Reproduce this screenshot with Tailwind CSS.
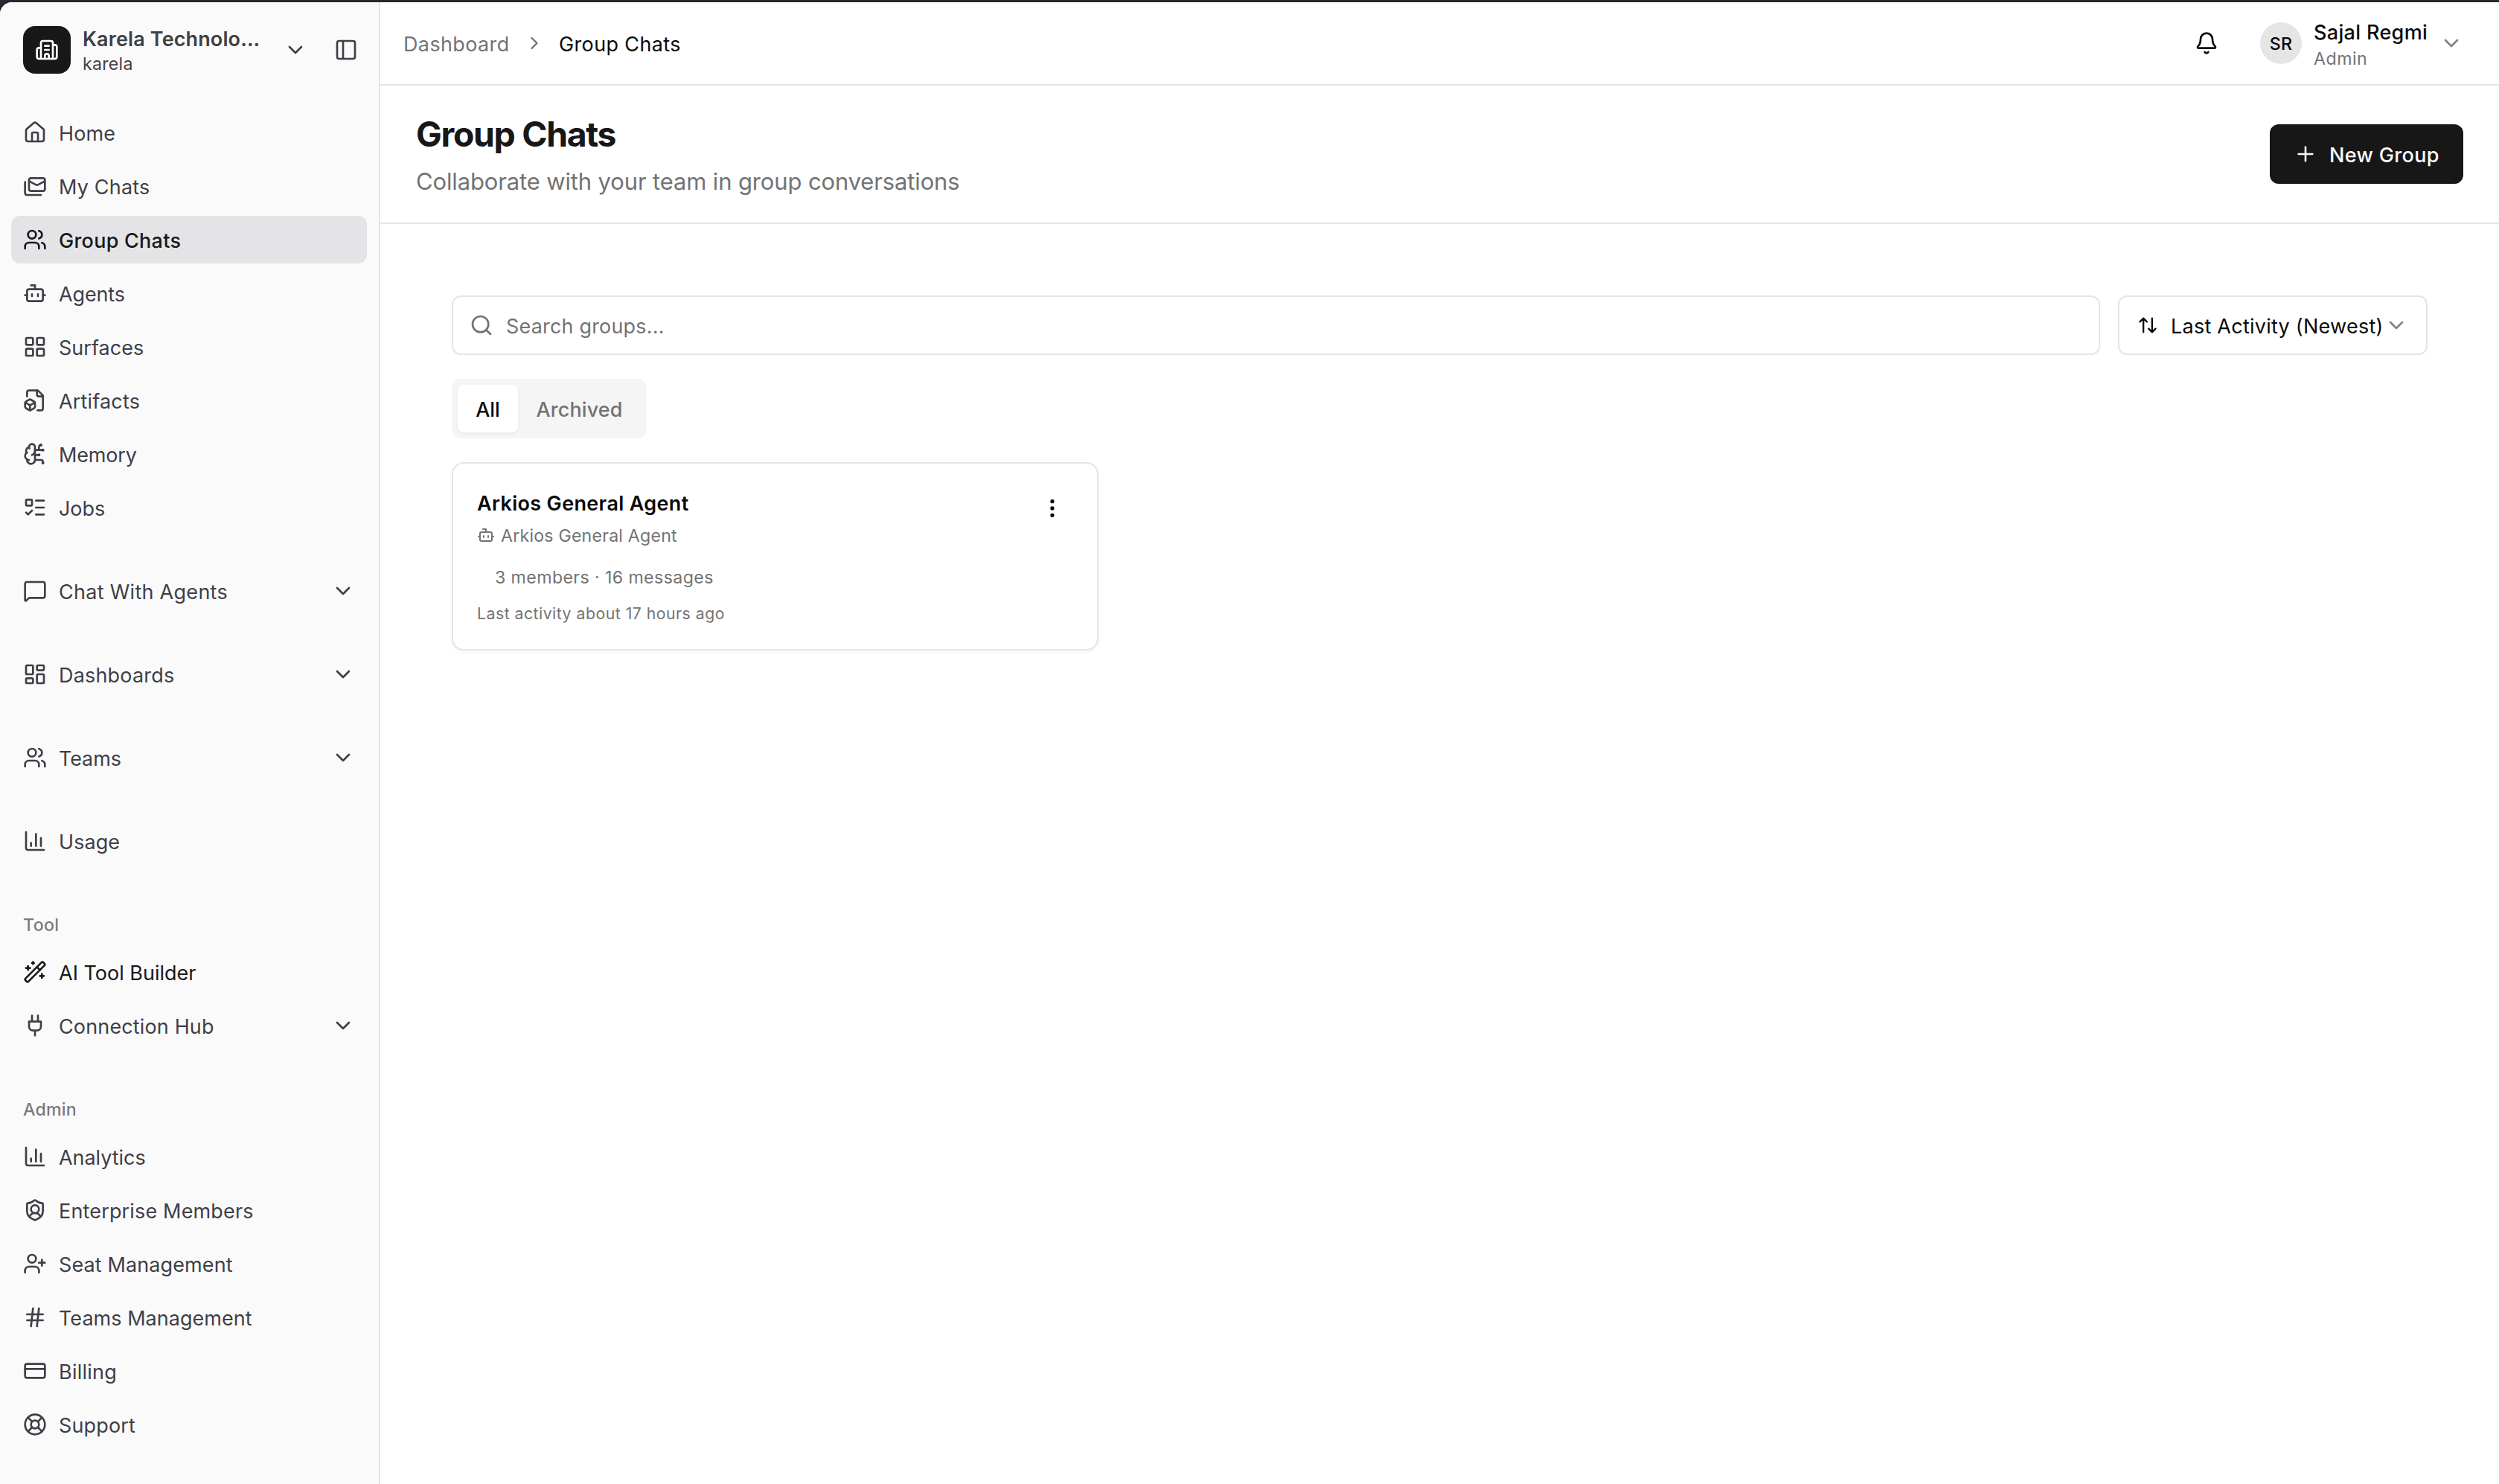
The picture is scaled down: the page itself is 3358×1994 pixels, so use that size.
<!DOCTYPE html>
<html lang="en">
<head>
<meta charset="utf-8">
<title>Group Chats</title>
<script src="https://cdn.jsdelivr.net/npm/@tailwindcss/browser@4"></script>
</head>
<body class="h-[1994px] w-[3358px] overflow-hidden bg-[#28262f] pt-[3px] font-['Inter',sans-serif] text-[27px] leading-[41px] text-neutral-950">

<!-- Icon sprite -->
<svg class="hidden" aria-hidden="true">
  <symbol id="building" viewBox="0 0 24 24"><path d="M10 12h4M10 8h4M14 21v-3a2 2 0 0 0-4 0v3M6 10H4a2 2 0 0 0-2 2v7a2 2 0 0 0 2 2h16a2 2 0 0 0 2-2V9a2 2 0 0 0-2-2h-2M6 21V5a2 2 0 0 1 2-2h8a2 2 0 0 1 2 2v16"/></symbol>
  <symbol id="chevron-down" viewBox="0 0 24 24"><path d="m6 9 6 6 6-6"/></symbol>
  <symbol id="chevron-right" viewBox="0 0 24 24"><path d="m9 18 6-6-6-6"/></symbol>
  <symbol id="panel" viewBox="0 0 24 24"><rect width="18" height="18" x="3" y="3" rx="2"/><path d="M9 3v18"/></symbol>
  <symbol id="house" viewBox="0 0 24 24"><path d="M15 21v-8a1 1 0 0 0-1-1h-4a1 1 0 0 0-1 1v8"/><path d="M3 10a2 2 0 0 1 .709-1.528l7-6a2 2 0 0 1 2.582 0l7 6A2 2 0 0 1 21 10v9a2 2 0 0 1-2 2H5a2 2 0 0 1-2-2z"/></symbol>
  <symbol id="mails" viewBox="0 0 24 24"><rect width="16" height="13" x="6" y="4" rx="2"/><path d="m22 7-7.1 3.78c-.57.3-1.23.3-1.8 0L6 7"/><path d="M2 8v11c0 1.1.9 2 2 2h14"/></symbol>
  <symbol id="users" viewBox="0 0 24 24"><path d="M16 21v-2a4 4 0 0 0-4-4H6a4 4 0 0 0-4 4v2"/><circle cx="9" cy="7" r="4"/><path d="M22 21v-2a4 4 0 0 0-3-3.87"/><path d="M16 3.13a4 4 0 0 1 0 7.75"/></symbol>
  <symbol id="bot" viewBox="0 0 24 24"><path d="M12 8V4H8"/><rect width="16" height="12" x="4" y="8" rx="2"/><path d="M2 14h2M20 14h2M15 13v2M9 13v2"/></symbol>
  <symbol id="grid" viewBox="0 0 24 24"><rect width="7" height="7" x="3" y="3" rx="1"/><rect width="7" height="7" x="14" y="3" rx="1"/><rect width="7" height="7" x="14" y="14" rx="1"/><rect width="7" height="7" x="3" y="14" rx="1"/></symbol>
  <symbol id="file-box" viewBox="0 0 24 24"><path d="M14.5 22H18a2 2 0 0 0 2-2V7l-5-5H6a2 2 0 0 0-2 2v4"/><path d="M14 2v4a2 2 0 0 0 2 2h4"/><path d="M3 13.1a2 2 0 0 0-1 1.76v3.24a2 2 0 0 0 .97 1.78L6 21.7a2 2 0 0 0 2.03.01L11 19.9a2 2 0 0 0 1-1.76V14.9a2 2 0 0 0-.97-1.78L8 11.3a2 2 0 0 0-2.03-.01Z"/><path d="M7 17v5M11.7 14.2 7 17l-4.7-2.8"/></symbol>
  <symbol id="brain" viewBox="0 0 24 24"><path d="M12 5a3 3 0 1 0-5.997.125 4 4 0 0 0-2.526 5.77 4 4 0 0 0 .556 6.588A4 4 0 1 0 12 18Z"/><path d="M9 13a4.5 4.5 0 0 0 3-4M6.003 5.125A3 3 0 0 0 6.401 6.5M3.477 10.896a4 4 0 0 1 .585-.396M6 18a4 4 0 0 1-1.967-.516M12 13h4M12 18h6a2 2 0 0 1 2 2v1M12 8h8M16 8V5a2 2 0 0 1 2-2"/><circle cx="16" cy="13" r=".5"/><circle cx="18" cy="3" r=".5"/><circle cx="20" cy="21" r=".5"/><circle cx="20" cy="8" r=".5"/></symbol>
  <symbol id="list-todo" viewBox="0 0 24 24"><path d="M13 5h8M13 12h8M13 19h8M3 17l2 2 4-4"/><rect x="3" y="4" width="6" height="6" rx="1"/></symbol>
  <symbol id="message" viewBox="0 0 24 24"><path d="M22 17a2 2 0 0 1-2 2H6.828a2 2 0 0 0-1.414.586l-2.202 2.202A.71.71 0 0 1 2 21.286V5a2 2 0 0 1 2-2h16a2 2 0 0 1 2 2z"/></symbol>
  <symbol id="dashboard" viewBox="0 0 24 24"><rect width="7" height="9" x="3" y="3" rx="1"/><rect width="7" height="5" x="14" y="3" rx="1"/><rect width="7" height="9" x="14" y="12" rx="1"/><rect width="7" height="5" x="3" y="16" rx="1"/></symbol>
  <symbol id="chart" viewBox="0 0 24 24"><path d="M3 3v16a2 2 0 0 0 2 2h16M18 17V9M13 17V5M8 17v-3"/></symbol>
  <symbol id="wand" viewBox="0 0 24 24"><path d="m21.64 3.64-1.28-1.28a1.21 1.21 0 0 0-1.72 0L2.36 18.64a1.21 1.21 0 0 0 0 1.72l1.28 1.28a1.2 1.2 0 0 0 1.72 0L21.64 5.36a1.2 1.2 0 0 0 0-1.72"/><path d="m14 7 3 3M5 6v4M19 14v4M10 2v2M7 8H3M21 16h-4M11 3H9"/></symbol>
  <symbol id="plug" viewBox="0 0 24 24"><path d="M12 22v-5M9 8V2M15 8V2M18 8v5a4 4 0 0 1-4 4h-4a4 4 0 0 1-4-4V8Z"/></symbol>
  <symbol id="shield-user" viewBox="0 0 24 24"><path d="M20 13c0 5-3.5 7.5-7.66 8.95a1 1 0 0 1-.67-.01C7.5 20.5 4 18 4 13V6a1 1 0 0 1 1-1c2 0 4.5-1.2 6.24-2.72a1.17 1.17 0 0 1 1.52 0C14.51 3.81 17 5 19 5a1 1 0 0 1 1 1z"/><path d="M6.376 18.91a6 6 0 0 1 11.249.003"/><circle cx="12" cy="11" r="4"/></symbol>
  <symbol id="user-plus" viewBox="0 0 24 24"><path d="M16 21v-2a4 4 0 0 0-4-4H6a4 4 0 0 0-4 4v2"/><circle cx="9" cy="7" r="4"/><path d="M19 8v6M22 11h-6"/></symbol>
  <symbol id="hash" viewBox="0 0 24 24"><path d="M4 9h16M4 15h16M10 3 8 21M16 3l-2 18"/></symbol>
  <symbol id="card" viewBox="0 0 24 24"><rect width="20" height="14" x="2" y="5" rx="2"/><path d="M2 10h20"/></symbol>
  <symbol id="life-buoy" viewBox="0 0 24 24"><circle cx="12" cy="12" r="10"/><path d="m4.93 4.93 4.24 4.24M14.83 9.17l4.24-4.24M14.83 14.83l4.24 4.24M9.17 14.83l-4.24 4.24"/><circle cx="12" cy="12" r="4"/></symbol>
  <symbol id="bell" viewBox="0 0 24 24"><path d="M10.268 21a2 2 0 0 0 3.464 0"/><path d="M3.262 15.326A1 1 0 0 0 4 17h16a1 1 0 0 0 .74-1.673C19.41 13.956 18 12.499 18 8A6 6 0 0 0 6 8c0 4.499-1.411 5.956-2.738 7.326"/></symbol>
  <symbol id="plus" viewBox="0 0 24 24"><path d="M5 12h14M12 5v14"/></symbol>
  <symbol id="search" viewBox="0 0 24 24"><circle cx="11" cy="11" r="8"/><path d="m21 21-4.3-4.3"/></symbol>
  <symbol id="arrows" viewBox="0 0 24 24"><path d="m21 16-4 4-4-4M17 20V4M3 8l4-4 4 4M7 4v16"/></symbol>
  <symbol id="dots" viewBox="0 0 24 24"><circle cx="12" cy="12" r="1"/><circle cx="12" cy="5" r="1"/><circle cx="12" cy="19" r="1"/></symbol>
</svg>

<div class="flex h-[1991px] overflow-hidden rounded-tl-[16px] bg-white [&_svg]:shrink-0 [&_svg]:fill-none [&_svg]:stroke-current [&_svg]:stroke-2 [&_svg]:[stroke-linecap:round] [&_svg]:[stroke-linejoin:round]">

  <aside class="flex w-[511px] shrink-0 flex-col border-r-2 border-neutral-200 bg-neutral-50 text-zinc-700">
    <div class="flex h-16 mt-8 items-center pl-[31px] pr-7">
      <div class="flex size-16 items-center justify-center rounded-[16px] bg-zinc-900 text-white"><svg class="size-8"><use href="#building"/></svg></div>
      <div class="ml-4 w-[270px] whitespace-nowrap pt-[2px]">
        <div class="font-semibold leading-[33px] tracking-[0.12px]">Karela Technolo...</div>
        <div class="mt-[3px] text-[23.2px] leading-[28px] tracking-[0.24px]">karela</div>
      </div>
      <svg class="size-8"><use href="#chevron-down"/></svg>
      <svg class="ml-auto size-8"><use href="#panel"/></svg>
    </div>

    <nav class="mt-[47px] flex flex-col gap-12 pl-[15px] pr-4 [&_a]:flex [&_a]:h-16 [&_a]:items-center [&_a]:gap-4 [&_a]:rounded-[12px] [&_a]:px-4 [&_span]:pt-[3px] [&_h2]:flex [&_h2]:h-16 [&_h2]:items-center [&_h2]:px-4 [&_h2]:pt-[2px] [&_h2]:text-[23.2px] [&_h2]:leading-[28px] [&_h2]:font-medium [&_h2]:text-zinc-700/70">
      <div class="flex flex-col gap-2">
        <a><svg class="size-8"><use href="#house"/></svg><span class="tracking-[0.13px]">Home</span></a>
        <a><svg class="size-8"><use href="#mails"/></svg><span class="tracking-[0.18px]">My Chats</span></a>
        <a class="bg-zinc-200 font-medium text-zinc-900"><svg class="size-8"><use href="#users"/></svg><span class="tracking-[0.25px]">Group Chats</span></a>
        <a><svg class="size-8"><use href="#bot"/></svg><span class="tracking-[-0.15px]">Agents</span></a>
        <a><svg class="size-8"><use href="#grid"/></svg><span class="tracking-[0.03px]">Surfaces</span></a>
        <a><svg class="size-8"><use href="#file-box"/></svg><span class="tracking-[0.17px]">Artifacts</span></a>
        <a><svg class="size-8"><use href="#brain"/></svg><span class="tracking-[-0.17px]">Memory</span></a>
        <a><svg class="size-8"><use href="#list-todo"/></svg><span class="tracking-[-0.04px]">Jobs</span></a>
      </div>
      <a><svg class="size-8"><use href="#message"/></svg><span class="tracking-[0.28px]">Chat With Agents</span><svg class="ml-auto size-8"><use href="#chevron-down"/></svg></a>
      <a><svg class="size-8"><use href="#dashboard"/></svg><span class="tracking-[0.19px]">Dashboards</span><svg class="ml-auto size-8"><use href="#chevron-down"/></svg></a>
      <a><svg class="size-8"><use href="#users"/></svg><span class="tracking-[-0.11px]">Teams</span><svg class="ml-auto size-8"><use href="#chevron-down"/></svg></a>
      <a><svg class="size-8"><use href="#chart"/></svg><span class="tracking-[0.06px]">Usage</span></a>
      <div>
        <h2 class="tracking-[0.32px]">Tool</h2>
        <div class="flex flex-col gap-2">
          <a class="text-zinc-900"><svg class="size-8"><use href="#wand"/></svg><span>AI Tool Builder</span></a>
          <a><svg class="size-8"><use href="#plug"/></svg><span class="tracking-[0.14px]">Connection Hub</span><svg class="ml-auto size-8"><use href="#chevron-down"/></svg></a>
        </div>
      </div>
      <div>
        <h2 class="tracking-[0.17px]">Admin</h2>
        <div class="flex flex-col gap-2">
          <a><svg class="size-8"><use href="#chart"/></svg><span class="tracking-[-0.05px]">Analytics</span></a>
          <a><svg class="size-8"><use href="#shield-user"/></svg><span class="tracking-[0.16px]">Enterprise Members</span></a>
          <a><svg class="size-8"><use href="#user-plus"/></svg><span class="tracking-[0.11px]">Seat Management</span></a>
          <a><svg class="size-8"><use href="#hash"/></svg><span class="tracking-[0.03px]">Teams Management</span></a>
          <a><svg class="size-8"><use href="#card"/></svg><span class="tracking-[0.25px]">Billing</span></a>
          <a><svg class="size-8"><use href="#life-buoy"/></svg><span class="tracking-[0.15px]">Support</span></a>
        </div>
      </div>
    </nav>
  </aside>

  <main class="flex flex-1 flex-col">
    <header class="flex h-[112px] shrink-0 items-center border-b-2 border-neutral-200 pl-[31px] pr-12">
      <div class="flex items-center gap-[19px]">
        <span class="w-[143px] pt-[3px] tracking-[0.37px] text-neutral-500">Dashboard</span>
        <svg class="size-7 text-neutral-500"><use href="#chevron-right"/></svg>
        <span class="pt-[3px] tracking-[0.36px]">Group Chats</span>
      </div>
      <div class="ml-auto flex items-center">
        <svg class="size-8"><use href="#bell"/></svg>
        <div class="ml-14 flex size-14 items-center justify-center rounded-full bg-neutral-200 pt-[2px] text-[23.2px] font-medium leading-[28px] tracking-[0.32px]">SR</div>
        <div class="ml-4 w-[153px] whitespace-nowrap pt-[4px]">
          <div class="font-medium leading-[33px] tracking-[0.34px]">Sajal Regmi</div>
          <div class="mt-[5px] text-[23.2px] leading-[28px] tracking-[0.5px] text-neutral-500">Admin</div>
        </div>
        <svg class="ml-4 size-8 opacity-50"><use href="#chevron-down"/></svg>
      </div>
    </header>

    <section class="flex h-[186px] shrink-0 items-center justify-between border-b-2 border-neutral-200 pl-12 pr-12">
      <div>
        <h1 class="text-[46.4px] font-bold leading-[56px] tracking-[-1.33px] text-neutral-900">Group Chats</h1>
        <p class="mt-[17px] text-[31px] leading-[37px] tracking-[-0.14px] text-neutral-500">Collaborate with your team in group conversations</p>
      </div>
      <button class="flex h-20 w-[260px] items-center gap-4 rounded-[12px] bg-neutral-900 pl-8 font-medium text-neutral-50"><svg class="size-8"><use href="#plus"/></svg><span class="whitespace-nowrap pt-[3px] tracking-[0.33px]">New Group</span></button>
    </section>

    <div class="flex flex-col items-start gap-8 p-24">
      <div class="flex w-full gap-6">
        <div class="flex h-20 flex-1 items-center gap-[17px] rounded-[12px] border-2 border-neutral-200 px-[22px] text-neutral-500"><svg class="size-8"><use href="#search"/></svg><span class="pt-[3px] tracking-[0.18px]">Search groups...</span></div>
        <div class="flex h-20 w-[416px] items-center rounded-[12px] border-2 border-neutral-200 px-6"><svg class="size-7"><use href="#arrows"/></svg><span class="ml-[17px] whitespace-nowrap pt-[3px] tracking-[0.25px]">Last Activity (Newest)</span><svg class="ml-auto size-8 opacity-50"><use href="#chevron-down"/></svg></div>
      </div>

      <div class="flex h-20 rounded-[12px] bg-neutral-100 p-2 font-medium">
        <div class="flex w-[81px] items-center justify-center rounded-[8px] bg-white shadow-[0_2px_4px_rgba(0,0,0,0.05)]"><span class="pt-[3px]">All</span></div>
        <div class="flex w-[165px] items-center justify-center text-neutral-500"><span class="pt-[3px] tracking-[0.11px]">Archived</span></div>
      </div>

      <div class="grid w-full grid-cols-3 gap-6">
        <article class="h-[253px] rounded-[16px] border-2 border-neutral-200 px-8 pt-8 shadow-[0_2px_4px_rgba(0,0,0,0.05)]">
          <div class="flex justify-between">
            <div class="pt-[5px]">
              <h3 class="font-semibold leading-[33px] tracking-[0.33px]">Arkios General Agent</h3>
              <div class="mt-[13px] flex gap-2 text-[23.2px] leading-[28px] tracking-[0.19px] text-neutral-500"><svg class="mt-px size-6"><use href="#bot"/></svg>Arkios General Agent</div>
            </div>
            <div class="flex size-14 items-center justify-center"><svg class="size-8"><use href="#dots"/></svg></div>
          </div>
          <p class="mt-7 pl-6 text-[23.2px] leading-[28px] tracking-[0.38px] text-neutral-500">3 members · 16 messages</p>
          <p class="mt-[21px] text-[21.3px] leading-[26px] tracking-[0.47px] text-neutral-500">Last activity about 17 hours ago</p>
        </article>
      </div>
    </div>
  </main>
</div>
</body>
</html>
